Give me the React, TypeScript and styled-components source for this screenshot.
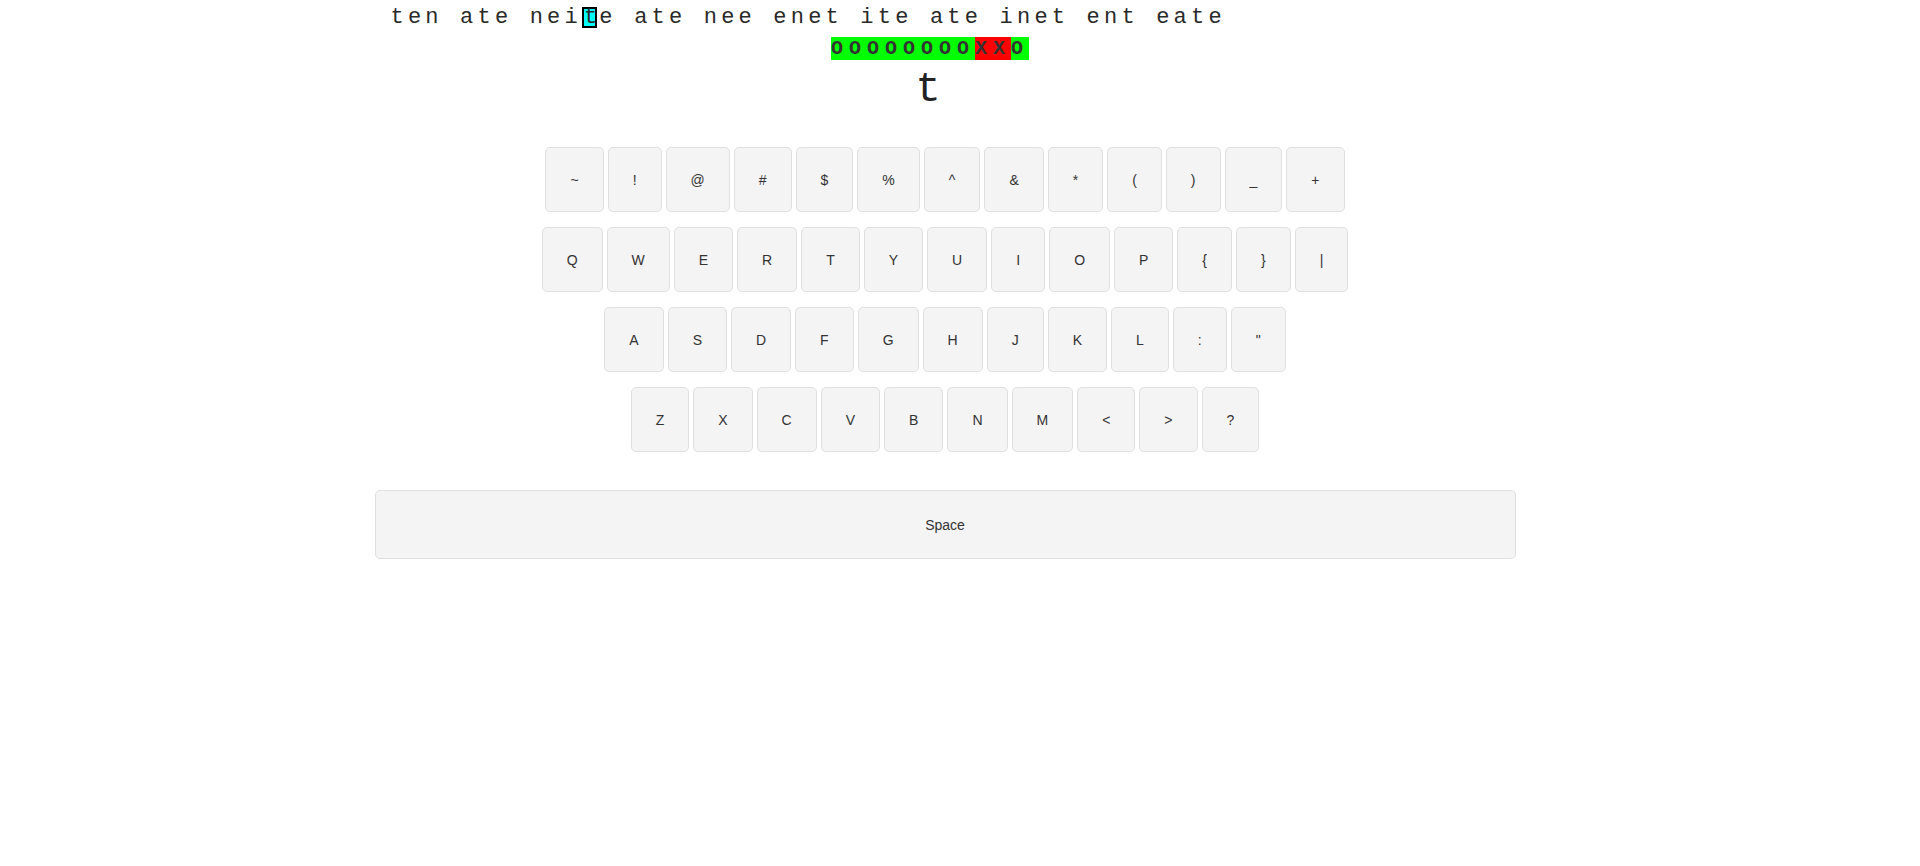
import React from 'react';
import styled, { createGlobalStyle } from 'styled-components';

const GlobalStyle = createGlobalStyle`
  html, body {
    margin: 0;
    padding: 0;
    background: #ffffff;
  }
  body {
    font-family: "Liberation Sans", Arial, sans-serif;
    color: #333;
  }
`;

const Page = styled.div`
  width: 1890px;
  display: flex;
  flex-direction: column;
  align-items: center;
`;

const Trainer = styled.div`
  width: 1141px;
  display: flex;
  flex-direction: column;
`;

const Prompt = styled.div`
  padding: 3px 0 0 16px;
  height: 30px;
  font-family: "Liberation Mono", "Courier New", monospace;
  font-size: 22px;
  line-height: 30px;
  letter-spacing: 4.2px;
  color: #2a2a2a;
  white-space: pre;
`;

const Cursor = styled.span`
  display: inline-block;
  box-sizing: border-box;
  width: 15px;
  height: 21px;
  margin-right: 2.4px;
  border: 2px solid #000;
  background: #00ffff;
  line-height: 17px;
  letter-spacing: 0;
  text-align: center;
`;

const Result = styled.div`
  margin-top: 4px;
  padding-right: 30px;
  text-align: center;
  font-family: "Liberation Mono", "Courier New", monospace;
  font-weight: bold;
  font-size: 20px;
  line-height: 23px;
  letter-spacing: 6px;
  color: #333;
  white-space: pre;
`;

const Mark = styled.span<{ $ok: boolean }>`
  background: ${p => (p.$ok ? '#00ff00' : '#ff0000')};
`;

const Current = styled.div`
  margin-top: 9px;
  padding-right: 34px;
  text-align: center;
  font-family: "Liberation Mono", "Courier New", monospace;
  font-size: 42px;
  line-height: 42px;
  color: #222;
`;

const Keyboard = styled.div`
  margin-top: 36px;
  display: flex;
  flex-direction: column;
  align-items: center;
  gap: 15px;
`;

const Row = styled.div`
  display: flex;
  justify-content: center;
  gap: 4px;
`;

const Key = styled.button`
  box-sizing: border-box;
  height: 65px;
  padding: 0 24px;
  border: 1px solid #e0e0e0;
  border-radius: 5px;
  background: #f4f4f4;
  font-family: "Liberation Sans", Arial, sans-serif;
  font-size: 14px;
  color: #333;
  cursor: pointer;
`;

const SpaceKey = styled(Key)`
  width: 100%;
  height: 69px;
  margin-top: 38px;
`;

const rows: string[][] = [
  ['~', '!', '@', '#', '$', '%', '^', '&', '*', '(', ')', '_', '+'],
  ['Q', 'W', 'E', 'R', 'T', 'Y', 'U', 'I', 'O', 'P', '{', '}', '|'],
  ['A', 'S', 'D', 'F', 'G', 'H', 'J', 'K', 'L', ':', '"'],
  ['Z', 'X', 'C', 'V', 'B', 'N', 'M', '<', '>', '?'],
];

const before = 'ten ate nei';
const current = 't';
const after = 'e ate nee enet ite ate inet ent eate';
const marks = 'OOOOOOOOXXO';

const App: React.FC = () => (
  <Page>
    <GlobalStyle />
    <Trainer>
      <Prompt>
        {before}
        <Cursor>{current}</Cursor>
        {after}
      </Prompt>
      <Result>
        {marks.split('').map((m, i) => (
          <Mark key={i} $ok={m === 'O'}>
            {m}
          </Mark>
        ))}
      </Result>
      <Current>{current}</Current>
      <Keyboard>
        {rows.map((row, i) => (
          <Row key={i}>
            {row.map(k => (
              <Key key={k}>{k}</Key>
            ))}
          </Row>
        ))}
      </Keyboard>
      <SpaceKey>Space</SpaceKey>
    </Trainer>
  </Page>
);

export default App;
